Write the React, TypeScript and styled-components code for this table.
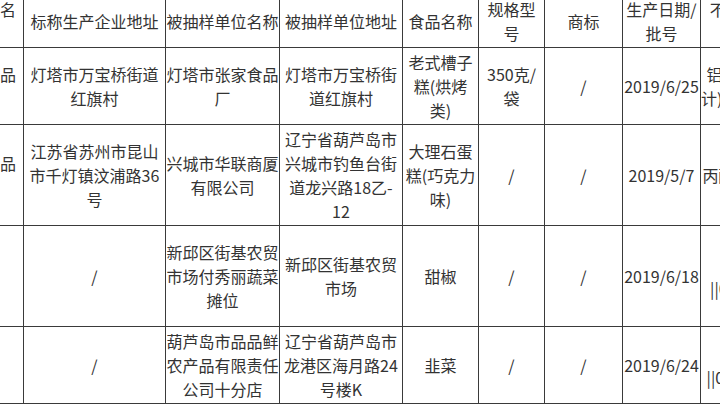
import styled, { createGlobalStyle } from "styled-components";

const GlobalStyle = createGlobalStyle`
  html, body {
    margin: 0;
    padding: 0;
    background: #ffffff;
  }
`;

const Viewport = styled.div`
  width: 720px;
  height: 405px;
  overflow: hidden;
  background: #ffffff;
`;

const columns = [127, 142, 114, 123, 76, 66, 78, 78, 180];
const tableWidth = columns.reduce((sum, w) => sum + w, 0);

const Table = styled.table<{ $width: number }>`
  width: ${(p) => p.$width}px;
  border-collapse: collapse;
  table-layout: fixed;
  margin: -6px 0 0 -104px;
  font-family: "Noto Sans CJK SC", "Microsoft YaHei", sans-serif;
  font-size: 16px;
  line-height: 24px;
  color: #333333;
`;

const Cell = styled.td`
  border: 1px solid #3a3a3a;
  padding: 2px 0;
  text-align: center;
  vertical-align: middle;
  white-space: nowrap;
  overflow: hidden;
`;

const HeadCell = styled(Cell).attrs({ as: "th" })`
  font-weight: normal;
`;

const header: string[][] = [
  ["标称生产企业名", "称"],
  ["标称生产企业地址"],
  ["被抽样单位名称"],
  ["被抽样单位地址"],
  ["食品名称"],
  ["规格型", "号"],
  ["商标"],
  ["生产日期/", "批号"],
  ["不合格项目||检验结果||", "标准值"],
];

const rows: string[][][] = [
  [
    ["灯塔市张家食品", "厂"],
    ["灯塔市万宝桥街道", "红旗村"],
    ["灯塔市张家食品", "厂"],
    ["灯塔市万宝桥街", "道红旗村"],
    ["老式槽子", "糕(烘烤", "类)"],
    ["350克/", "袋"],
    ["/"],
    ["2019/6/25"],
    ["铝的残留量(干样品,以Al", "计)||258mg/kg||100mg/kg"],
  ],
  [
    ["昆山福利来食品", "有限公司"],
    ["江苏省苏州市昆山", "市千灯镇汶浦路36", "号"],
    ["兴城市华联商厦", "有限公司"],
    ["辽宁省葫芦岛市", "兴城市钓鱼台街", "道龙兴路18乙-", "12"],
    ["大理石蛋", "糕(巧克力", "味)"],
    ["/"],
    ["/"],
    ["2019/5/7"],
    ["丙酸及其钠盐、钙盐（以"],
  ],
  [
    ["/"],
    ["/"],
    ["新邱区街基农贸", "市场付秀丽蔬菜", "摊位"],
    ["新邱区街基农贸", "市场"],
    ["甜椒"],
    ["/"],
    ["/"],
    ["2019/6/18"],
    ["克百威(以克百威", "及3-羟基克百威", "||0.066mg/kg||0.02mg", "/kg"],
  ],
  [
    ["/"],
    ["/"],
    ["葫芦岛市品品鲜", "农产品有限责任", "公司十分店"],
    ["辽宁省葫芦岛市", "龙港区海月路24", "号楼K"],
    ["韭菜"],
    ["/"],
    ["/"],
    ["2019/6/24"],
    ["腐霉利", "||0.37mg/kg||0.2mg/kg"],
  ],
];

const Lines = ({ lines }: { lines: string[] }) => (
  <>
    {lines.map((line, i) => (
      <span key={i}>
        {i > 0 && <br />}
        {line}
      </span>
    ))}
  </>
);

const App = () => {
  return (
    <Viewport>
      <GlobalStyle />
      <Table $width={tableWidth}>
        <colgroup>
          {columns.map((w, i) => (
            <col key={i} style={{ width: w }} />
          ))}
        </colgroup>
        <thead>
          <tr>
            {header.map((lines, i) => (
              <HeadCell key={i}>
                <Lines lines={lines} />
              </HeadCell>
            ))}
          </tr>
        </thead>
        <tbody>
          {rows.map((row, r) => (
            <tr key={r}>
              {row.map((lines, c) => (
                <Cell key={c}>
                  <Lines lines={lines} />
                </Cell>
              ))}
            </tr>
          ))}
        </tbody>
      </Table>
    </Viewport>
  );
};

export default App;
